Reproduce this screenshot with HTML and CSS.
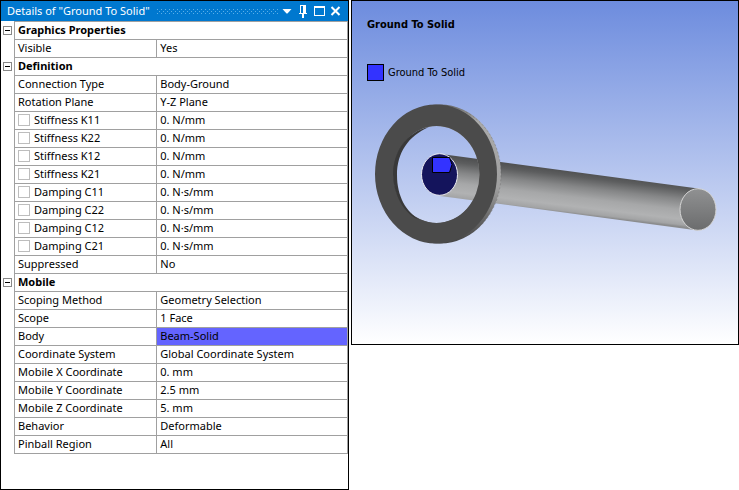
FILE: index.html
```html
<!DOCTYPE html>
<html lang="en">
<head>
<meta charset="utf-8">
<title>Ground To Solid</title>
<link rel="stylesheet" href="styles.css">
</head>
<body>
<main class="workspace">
  <section class="details">
    <header class="titlebar">
      <h1 class="title">Details of "Ground To Solid"</h1>
      <span class="grip"></span>
      <div class="tools">
        <button class="tool" type="button" aria-label="Menu"><svg viewBox="0 0 14 14"><path d="M1.500 5h9L6.500 9.500h-1z" fill="#fff"/></svg></button>
        <button class="tool" type="button" aria-label="Pin"><svg viewBox="0 0 14 14"><path d="M3 1h6v8h1v1H7v4H5v-4H2V9h1zM4 2v7h2V2z" fill="#fff" fill-rule="evenodd"/></svg></button>
        <button class="tool" type="button" aria-label="Maximize"><svg viewBox="0 0 14 14"><path d="M1 2h11v10H1zM2 4v7h9V4z" fill="#fff" fill-rule="evenodd"/></svg></button>
        <button class="tool" type="button" aria-label="Close"><svg viewBox="0 0 14 14"><path d="M2.500 3l8 8M10.500 3l-8 8" stroke="#fff" stroke-width="2"/></svg></button>
      </div>
    </header>
    <table class="props">
      <colgroup><col class="col-gutter"><col class="col-name"><col class="col-value"></colgroup>
      <tbody>
        <tr><td class="gutter"><button class="toggle" type="button" aria-label="Collapse Graphics Properties"></button></td><th class="group" colspan="2">Graphics Properties</th></tr>
        <tr><td class="gutter"></td><td>Visible</td><td>Yes</td></tr>
      </tbody>
      <tbody>
        <tr><td class="gutter"><button class="toggle" type="button" aria-label="Collapse Definition"></button></td><th class="group" colspan="2">Definition</th></tr>
        <tr><td class="gutter"></td><td>Connection Type</td><td>Body-Ground</td></tr>
        <tr><td class="gutter"></td><td>Rotation Plane</td><td>Y-Z Plane</td></tr>
        <tr><td class="gutter"></td><td><label class="param"><input type="checkbox">Stiffness K11</label></td><td>0. N/mm</td></tr>
        <tr><td class="gutter"></td><td><label class="param"><input type="checkbox">Stiffness K22</label></td><td>0. N/mm</td></tr>
        <tr><td class="gutter"></td><td><label class="param"><input type="checkbox">Stiffness K12</label></td><td>0. N/mm</td></tr>
        <tr><td class="gutter"></td><td><label class="param"><input type="checkbox">Stiffness K21</label></td><td>0. N/mm</td></tr>
        <tr><td class="gutter"></td><td><label class="param"><input type="checkbox">Damping C11</label></td><td>0. N·s/mm</td></tr>
        <tr><td class="gutter"></td><td><label class="param"><input type="checkbox">Damping C22</label></td><td>0. N·s/mm</td></tr>
        <tr><td class="gutter"></td><td><label class="param"><input type="checkbox">Damping C12</label></td><td>0. N·s/mm</td></tr>
        <tr><td class="gutter"></td><td><label class="param"><input type="checkbox">Damping C21</label></td><td>0. N·s/mm</td></tr>
        <tr><td class="gutter"></td><td>Suppressed</td><td>No</td></tr>
      </tbody>
      <tbody>
        <tr><td class="gutter"><button class="toggle" type="button" aria-label="Collapse Mobile"></button></td><th class="group" colspan="2">Mobile</th></tr>
        <tr><td class="gutter"></td><td>Scoping Method</td><td>Geometry Selection</td></tr>
        <tr><td class="gutter"></td><td>Scope</td><td>1 Face</td></tr>
        <tr><td class="gutter"></td><td>Body</td><td class="marked">Beam-Solid</td></tr>
        <tr><td class="gutter"></td><td>Coordinate System</td><td>Global Coordinate System</td></tr>
        <tr><td class="gutter"></td><td>Mobile X Coordinate</td><td>0. mm</td></tr>
        <tr><td class="gutter"></td><td>Mobile Y Coordinate</td><td>2.5 mm</td></tr>
        <tr><td class="gutter"></td><td>Mobile Z Coordinate</td><td>5. mm</td></tr>
        <tr><td class="gutter"></td><td>Behavior</td><td>Deformable</td></tr>
        <tr><td class="gutter"></td><td>Pinball Region</td><td>All</td></tr>
      </tbody>
    </table>
  </section>
  <section class="viewport">
    <svg class="scene" viewBox="352 1 386 343" role="img" aria-label="Beam passing through a ring">
      <defs>
        <linearGradient id="beam" gradientUnits="userSpaceOnUse" x1="570" y1="171" x2="565" y2="213">
          <stop offset="0" stop-color="#505152"/><stop offset=".12" stop-color="#5c5d5e"/><stop offset=".35" stop-color="#858687"/><stop offset=".6" stop-color="#a6a7a8"/><stop offset=".82" stop-color="#b1b2b3"/><stop offset=".95" stop-color="#a3a4a5"/><stop offset="1" stop-color="#8b8c8d"/>
        </linearGradient>
        <linearGradient id="cap" x1="0" y1="0" x2="0" y2="1"><stop offset="0" stop-color="#909192"/><stop offset="1" stop-color="#6b6c6d"/></linearGradient>
        <linearGradient id="rim" x1="0" y1="0" x2="0" y2="1"><stop offset="0" stop-color="#666"/><stop offset=".12" stop-color="#aaa"/><stop offset=".6" stop-color="#a0a0a0"/><stop offset=".85" stop-color="#606060"/><stop offset="1" stop-color="#444"/></linearGradient>
      </defs>
      <path d="M441 154L698 188.500V230.500L440 196z" fill="url(#beam)"/>
      <ellipse cx="698" cy="209.500" rx="18" ry="20.800" fill="url(#cap)" stroke="#d5d5d5"/>
      <path d="M379 174a61 69.500 0 0 1 122 0a61 69.500 0 0 1 -122 0zM393.500 174.500a43 48.500 0 0 0 86 0a43 48.500 0 0 0 -86 0z" fill="url(#rim)" fill-rule="evenodd"/>
      <path d="M466 112C488 124 501 148 501 174C501 202 487 226 466 236" fill="none" stroke="#555" stroke-opacity=".6" stroke-dasharray="2 2" stroke-width=".5"/>
      <path d="M375 174a61 69.500 0 0 1 122 0a61 69.500 0 0 1 -122 0zM393.500 174.500a43 48.500 0 0 0 86 0a43 48.500 0 0 0 -86 0z" fill="#4b4b4b" fill-rule="evenodd"/>
      <path d="M429 127C406 132 393 152 393 175C394 199 407 216 420 220C406 212 397 196 397 175C397 153 408 136 429 127z" fill="#393939"/>
      <ellipse cx="439.500" cy="174.500" rx="18" ry="20.800" fill="#14145c" stroke="#ececf2"/>
      <path d="M432.500 157.500h17l2.500 7l-2.500 8h-17z" fill="#3333ff" stroke="#000"/>
    </svg>
    <h2 class="plot-title">Ground To Solid</h2>
    <div class="legend"><span class="swatch"></span>Ground To Solid</div>
  </section>
</main>
</body>
</html>
```
FILE: styles.css
```css
* {
  box-sizing: border-box;
}

body {
  margin: 0;
  background: #fff;
  color: #000;
  font-family: "Noto Sans", "Open Sans", sans-serif;
  font-size: 11px;
}

.workspace {
  display: grid;
  grid-template-columns: minmax(0, 349fr) minmax(0, 388fr);
  align-items: start;
  gap: 2px;
  min-height: 100vh;
}

.details {
  align-self: stretch;
  border: 1px solid #000;
}

.titlebar {
  display: flex;
  align-items: center;
  height: 20px;
  padding: 0 5px 0 6px;
  background: #0078cf;
  color: #fff;
}

.title {
  margin: 0;
  font-size: 11px;
  font-weight: 400;
  line-height: 16px;
  padding-bottom: 1px;
  white-space: nowrap;
}

.grip {
  flex: 1;
  height: 5px;
  margin: 0 3px 0 7px;
  background-image:
    conic-gradient(from 270deg at 1px 1px, #5aaee8 90deg, transparent 0),
    conic-gradient(from 270deg at 1px 1px, #5aaee8 90deg, transparent 0);
  background-size: 4px 4px;
  background-position: 0 0, 2px 2px;
}

.tools {
  display: flex;
  gap: 2px;
}

.tool {
  display: block;
  width: 14px;
  height: 14px;
  padding: 0;
  border: 0;
  background: none;
}

.tool svg {
  display: block;
}

.props {
  width: 100%;
  table-layout: fixed;
  border-spacing: 0;
  line-height: 16px;
}

.col-gutter {
  width: 13px;
}

.col-name {
  width: 41%;
}

.props td,
.props th {
  height: 18px;
  padding: 0 3px 1px;
  border-bottom: 1px solid #a0a0a0;
  border-left: 1px solid #a0a0a0;
  text-align: left;
  white-space: nowrap;
}

.props td:last-child,
.props th {
  border-right: 1px solid #a0a0a0;
}

.props tbody:first-of-type tr:first-child th {
  border-top: 1px solid #a0a0a0;
}

.props .gutter {
  padding: 0 2px 1px;
  border: 0;
}

.toggle {
  display: block;
  width: 9px;
  height: 9px;
  padding: 0;
  border: 1px solid #888;
  background: linear-gradient(#000, #000) center / 5px 1px no-repeat;
}

.param {
  display: flex;
  align-items: center;
  gap: 4px;
}

.param input {
  appearance: none;
  width: 12px;
  height: 12px;
  margin: 0;
  border: 1px solid #bdbdbd;
  background: #fff;
}

.props .marked {
  background: #6464ff;
}

.viewport {
  position: relative;
  aspect-ratio: 388 / 345;
  padding: 15px;
  border: 1px solid #000;
  background: linear-gradient(#6d8cde, #fff);
  font-family: "DejaVu Sans Condensed", "Noto Sans", sans-serif;
}

.scene {
  position: absolute;
  inset: 0;
  width: 100%;
  height: 100%;
}

.plot-title {
  position: relative;
  margin: 0 0 31px;
  font-size: 11px;
  line-height: 17px;
}

.legend {
  position: relative;
  display: flex;
  align-items: center;
  gap: 4px;
  line-height: 17px;
}

.swatch {
  width: 17px;
  height: 17px;
  border: 1px solid #000;
  background: #3333ff;
}
```
